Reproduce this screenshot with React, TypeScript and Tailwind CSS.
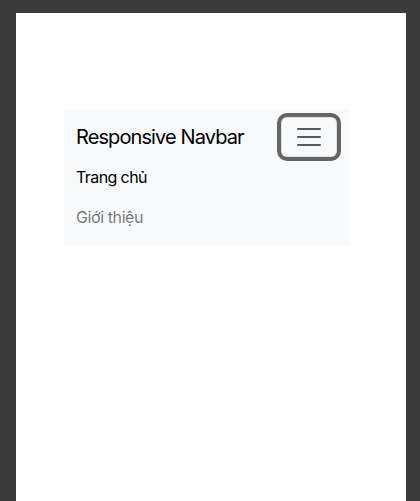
export default function App() {
  return (
    <div className="min-h-[501px] bg-[#3b3b3b] pl-4 pr-[14px] pt-[13px]">
      <div className="min-h-[488px] bg-white pt-[96px] pl-12 font-['Inter','Liberation_Sans',sans-serif]">
        <nav className="w-[286px] bg-[#f8f9fa] px-3 py-2">
          <div className="flex items-center justify-between">
            <a className="text-[20px] leading-[30px] text-black tracking-[-0.9px]">Responsive Navbar</a>
            <button className="mr-[1px] flex h-10 w-14 items-center justify-center rounded-[6px] border border-black/10 ring-4 ring-[#656565]">
              <svg width="30" height="30" viewBox="0 0 30 30">
                <path
                  d="M4 7h22M4 15h22M4 23h22"
                  stroke="rgba(33,37,41,0.75)"
                  strokeWidth="2"
                  strokeLinecap="round"
                />
              </svg>
            </button>
          </div>
          <ul className="flex flex-col">
            <li className="py-2 text-[16px] leading-6 text-black tracking-[-0.6px]">Trang chủ</li>
            <li className="py-2 text-[16px] leading-6 text-black/55 tracking-[-0.4px]">Giới thiệu</li>
          </ul>
        </nav>
      </div>
    </div>
  );
}
